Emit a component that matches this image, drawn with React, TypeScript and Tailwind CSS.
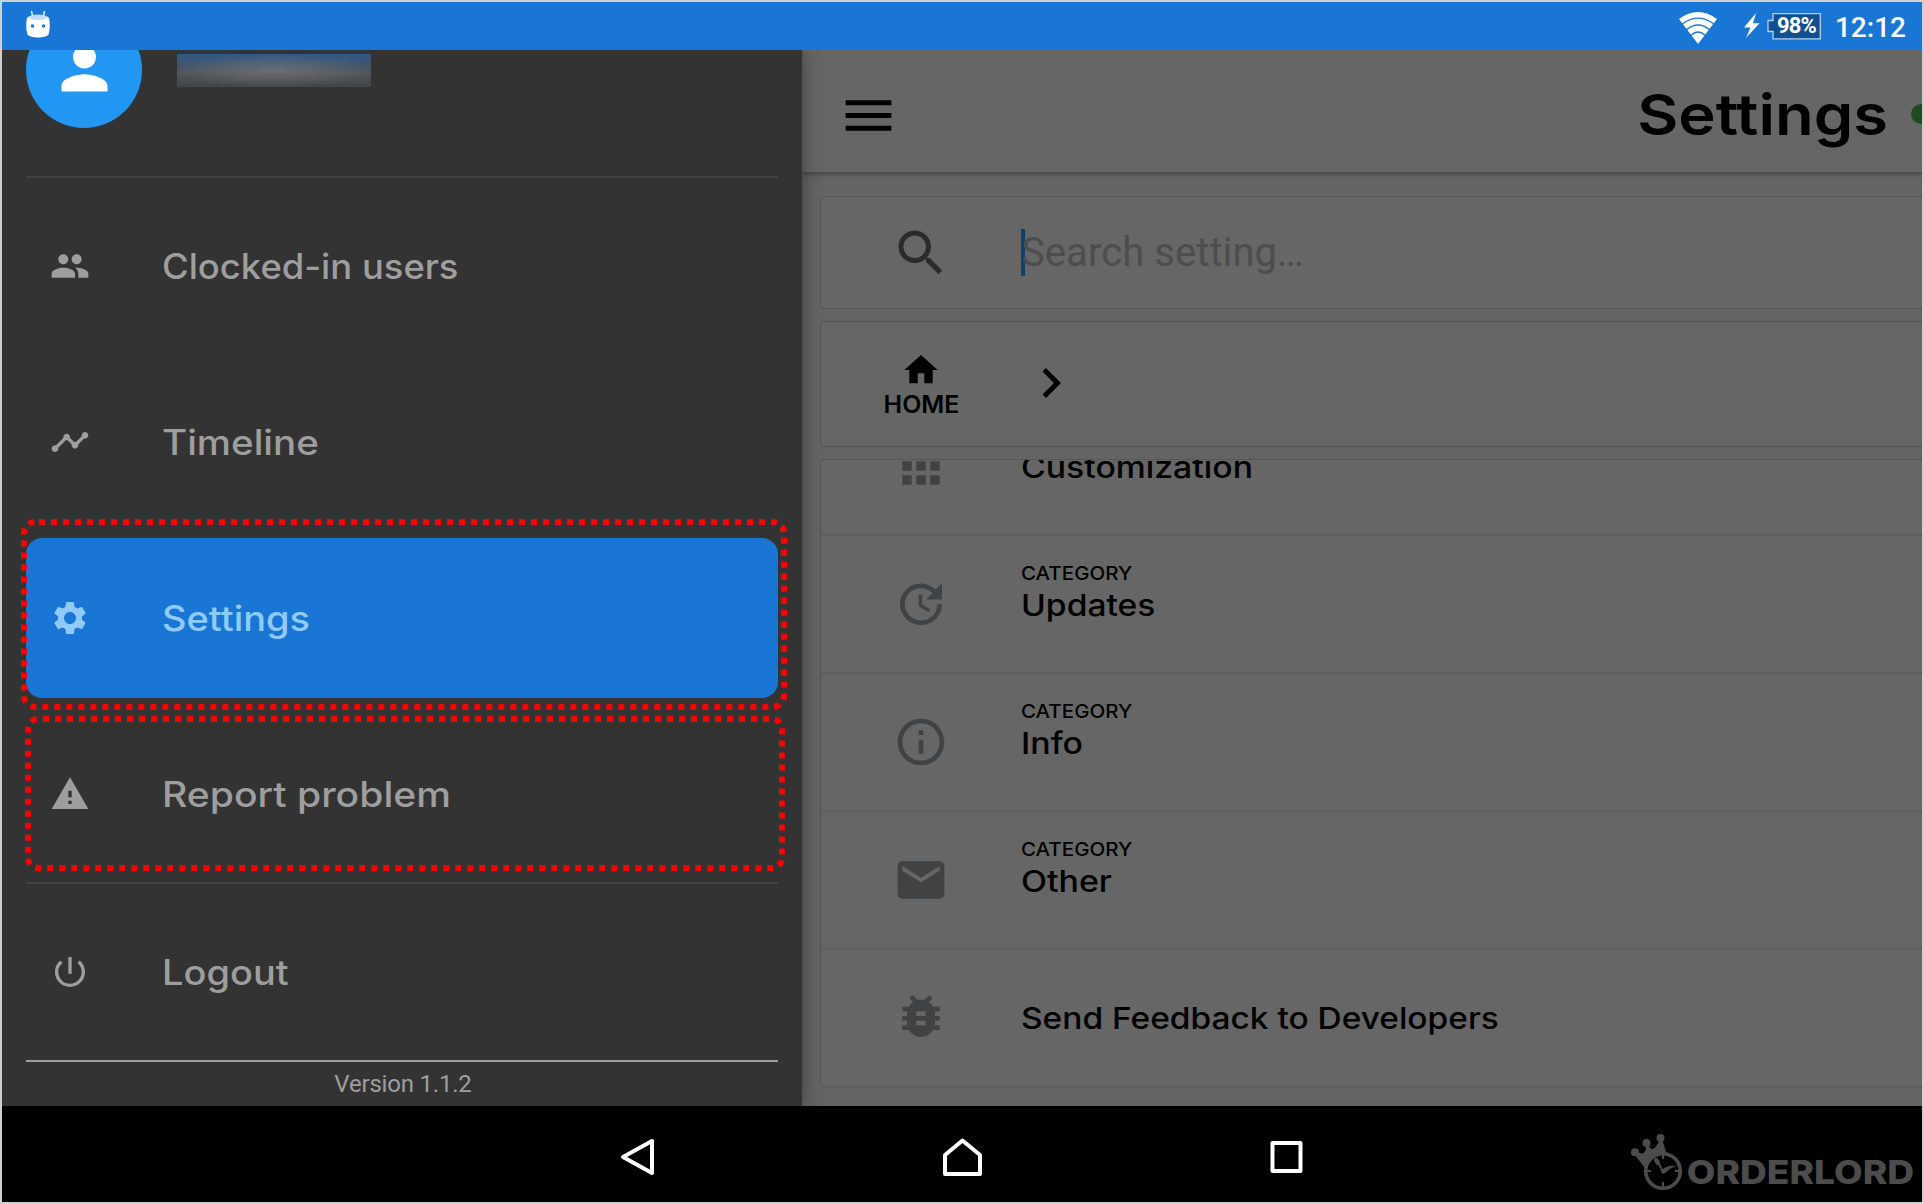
import type { ReactNode } from "react";
import type { IconType } from "react-icons";
import {
  MdPerson, MdPeople, MdTimeline, MdSettings, MdWarning, MdPowerSettingsNew,
  MdMenu, MdSearch, MdHome, MdChevronRight, MdApps, MdUpdate, MdInfoOutline,
  MdMail, MdBugReport,
} from "react-icons/md";

function StatusBar() {
  return (
    <header className="flex h-12 shrink-0 items-center justify-between bg-[#1976d4] pl-6 pr-4 text-white">
      <svg width="24" height="28" viewBox="0 0 24 28" className="mb-1">
        <path d="M5.500 1 6.500 6M18.500 1 17.500 6" stroke="#fff" strokeWidth="1.300" fill="none" />
        <path d="M1 8C4 4 20 4 23 8C24.200 13 24 20 22.500 24.500C20 28.500 4 28.500 1.500 24.500C0 20-.2 13 1 8Z" fill="#fff" />
        <ellipse cx="12" cy="7.300" rx="9.500" ry="2.700" fill="#c3daf4" />
        <circle cx="6.500" cy="16" r="1.700" fill="#1976d4" />
        <circle cx="17.500" cy="16" r="1.700" fill="#1976d4" />
      </svg>
      <div className="flex items-center">
        <svg width="40" height="34" viewBox="0 0 40 34" className="mr-[25px] mt-[3px]">
          <path d="M20 33 1 8Q20-6 39 8Z" fill="#fff" />
          <g fill="none" stroke="#1976d4" strokeWidth="1.400">
            <path d="M4.500 12.800Q20 1.500 35.500 12.800" />
            <path d="M8.500 18.600Q20 9.500 31.500 18.600" />
            <path d="M13 24.200Q20 18 27 24.200" />
          </g>
        </svg>
        <svg width="18" height="26" viewBox="0 0 18 26" className="mr-1.5">
          <path d="M13 0 1 14.500 7.500 14.500 3 25 16.500 10.200 10 10.200Z" fill="#fff" />
        </svg>
        <div className="relative flex h-[27px] w-[54px] items-center">
          <svg width="54" height="27" viewBox="0 0 54 27" className="absolute inset-0">
            <path d="M6 .7H53.300V25.800H6V18.500H1V7.500H6Z" fill="#11508f" stroke="#b5d0ee" strokeWidth="1.300" />
          </svg>
          <span className="relative -mt-px ml-2.5 font-[Roboto] text-[22px] font-bold leading-none tracking-[-0.9px]">98%</span>
        </div>
        <span className="ml-3.5 mt-1 font-[Roboto] text-[28px] font-medium leading-none">12:12</span>
      </div>
    </header>
  );
}

type DrawerItemProps = { icon: IconType; label: string; stretch: string; active?: boolean };

function DrawerItem({ icon: Icon, label, stretch, active = false }: DrawerItemProps) {
  return (
    <div className={active
      ? "flex h-40 items-center rounded-2xl bg-[#1976d4] pl-6 text-[#90caf9]"
      : "flex h-40 items-center rounded-2xl pl-6 text-[#9e9e9e]"}>
      <Icon size={40} />
      <span className={"ml-[72px] origin-left font-[Inter] text-[35px] font-medium leading-none " + stretch}>{label}</span>
    </div>
  );
}

function Drawer() {
  return (
    <aside className="relative z-10 flex w-[800px] shrink-0 flex-col bg-[#333333] px-6 shadow-[0_0_18px_rgba(0,0,0,0.4)]">
      <div className="flex h-[126px] items-start">
        <div className="-mt-[38px] flex size-[116px] shrink-0 items-center justify-center rounded-full bg-[#2196f3] text-white">
          <MdPerson size={69} className="-mt-1" />
        </div>
        <div className="ml-[35px] mt-1 h-[33px] w-[194px] bg-[radial-gradient(ellipse_at_center,rgba(150,150,150,0.4),transparent_75%),linear-gradient(#2f5687,#505356_60%,#444444)]" />
      </div>
      <hr className="h-0.5 border-0 bg-[#424242]" />
      <nav className="flex flex-col gap-4 py-2">
        <DrawerItem icon={MdPeople} label="Clocked-in users" stretch="scale-x-[1.04]" />
        <DrawerItem icon={MdTimeline} label="Timeline" stretch="scale-x-[1.1]" />
        <DrawerItem icon={MdSettings} label="Settings" stretch="scale-x-[1.085]" active />
        <DrawerItem icon={MdWarning} label="Report problem" stretch="scale-x-[1.117]" />
      </nav>
      <hr className="h-0.5 border-0 bg-[#424242]" />
      <div className="py-2">
        <DrawerItem icon={MdPowerSettingsNew} label="Logout" stretch="scale-x-[1.085]" />
      </div>
      <hr className="h-0.5 border-0 bg-[#9e9e9e]" />
      <p className="pl-0.5 pt-1.5 text-center font-[Roboto] text-2xl tracking-[-0.2px] text-[#9e9e9e]">Version 1.1.2</p>
    </aside>
  );
}

function Card({ className, children }: { className: string; children: ReactNode }) {
  return <section className={"ml-[18px] rounded-l border border-r-0 border-[#575757] bg-[#666666] " + className}>{children}</section>;
}

type CategoryRowProps = { icon: IconType; title: string; category?: string; iconClass?: string; titleClass?: string };

function CategoryRow({ icon: Icon, title, category, iconClass = "-mt-px", titleClass = "scale-x-[1.13]" }: CategoryRowProps) {
  return (
    <div className="flex h-[138px] shrink-0 items-center border-b-2 border-[#5e5e5e] pl-[72px]">
      <Icon size={56} color="#404244" className={"shrink-0 " + iconClass} />
      <div className={category
        ? "ml-[72px] flex flex-col items-start pb-[22px] font-[Inter] text-black"
        : "ml-[72px] flex flex-col items-start font-[Inter] text-black"}>
        {category && <span className="relative top-px origin-left scale-x-[1.08] text-[19px] font-medium leading-6">{category}</span>}
        <span className={"origin-left text-[30px] font-medium leading-10 " + titleClass}>{title}</span>
      </div>
    </div>
  );
}

function SettingsPane() {
  return (
    <main className="flex min-w-0 grow flex-col overflow-hidden bg-[#646464]">
      <div className="relative flex h-[122px] shrink-0 items-center justify-between overflow-visible bg-[#666666] pl-9 shadow-[0_2px_5px_rgba(0,0,0,0.35)]">
        <MdMenu size={61} color="#000" className="mt-[9px]" />
        <div className="mt-1.5 flex items-center">
          <h1 className="origin-right scale-x-[1.11] font-[Inter] text-[57px] font-semibold leading-none text-black">Settings</h1>
          <span className="-mr-[9px] ml-[23px] size-5 rounded-full bg-[#1f4a22]" />
        </div>
      </div>
      <Card className="mt-6 flex h-[113px] shrink-0 items-center pl-[70px]">
        <MdSearch size={60} color="#2b2b2b" />
        <span className="ml-[70px] h-[47px] w-1 bg-[#0b4270]" />
        <span className="-ml-1 font-[Roboto] text-[40px] leading-none tracking-[0.07px] text-[#4d4d4d]">Search setting…</span>
      </Card>
      <Card className="mt-3 flex h-[126px] shrink-0 items-center pl-[63px]">
        <div className="flex w-[74px] flex-col items-center">
          <MdHome size={40} color="#000" className="relative top-px" />
          <span className="ml-px mt-0.5 scale-x-[1.04] font-[Inter] text-2xl font-semibold leading-7 text-black">HOME</span>
        </div>
        <MdChevronRight size={60} color="#000" className="-mt-0.5 ml-[63px]" />
      </Card>
      <Card className="mt-3 flex h-[629px] shrink-0 flex-col justify-end overflow-hidden border-b-0">
        <CategoryRow icon={MdApps} title="Customization" titleClass="mt-0.5 scale-x-[1.125]" />
        <CategoryRow icon={MdUpdate} title="Updates" category="CATEGORY" titleClass="scale-x-[1.12]" />
        <CategoryRow icon={MdInfoOutline} title="Info" category="CATEGORY" />
        <CategoryRow icon={MdMail} title="Other" category="CATEGORY" />
        <CategoryRow icon={MdBugReport} title="Send Feedback to Developers" iconClass="-mt-1" titleClass="scale-x-[1.115]" />
      </Card>
    </main>
  );
}

function Highlights() {
  return (
    <svg width="800" height="400" viewBox="0 500 800 400" className="pointer-events-none absolute left-0 top-[500px] z-20">
      <g fill="none" stroke="#ff0000" strokeWidth="6" strokeDasharray="6 6">
        <rect x="24" y="522" width="760" height="185" rx="11" strokeDashoffset="8" />
        <rect x="28" y="719" width="754" height="149" rx="10" strokeDashoffset="7" />
      </g>
    </svg>
  );
}

function Watermark() {
  return (
    <div className="absolute right-2 top-[27px] flex items-start text-[#4c4c4c]">
      <svg width="56" height="58" viewBox="1630 1133 56 58">
        <g fill="currentColor">
          <circle cx="1635" cy="1152.300" r="4" />
          <circle cx="1646.500" cy="1143" r="4" />
          <circle cx="1660.500" cy="1138" r="4" />
          <path d="M1634 1154 1637 1152Q1647 1157 1646 1144L1648 1144Q1653 1156 1660 1139L1662 1139L1668 1158L1645 1168Z" />
        </g>
        <circle cx="1663" cy="1171" r="17.300" fill="#000" stroke="currentColor" strokeWidth="3.600" />
        <path d="M1663 1155v4M1663 1187v-5M1647 1171h4M1679 1171h-4M1663 1172l-6-12" stroke="currentColor" strokeWidth="2" />
        <ellipse cx="1657" cy="1161.500" rx="2.300" ry="4" transform="rotate(-28 1657 1161.500)" fill="currentColor" />
        <path d="M1661 1171Q1666 1165 1676 1166Q1670 1168 1665 1173Q1662 1175 1661 1171Z" fill="currentColor" />
      </svg>
      <span className="ml-[26px] mt-[19px] origin-right scale-x-[1.125] font-[Inter] text-[33px] font-extrabold leading-10">ORDERLORD</span>
    </div>
  );
}

function NavigationBar() {
  return (
    <footer className="relative flex h-24 shrink-0 items-center justify-center gap-[284px] bg-black pt-2">
      <svg width="40" height="40" viewBox="0 0 40 40" fill="none" stroke="#fff" strokeWidth="4" strokeLinejoin="round">
        <path d="M34 3V35L5 19Z" />
      </svg>
      <svg width="40" height="40" viewBox="0 0 40 40" fill="none" stroke="#fff" strokeWidth="4" strokeLinejoin="round">
        <path d="M20.500 2.500 38 17V36H3V17Z" />
      </svg>
      <svg width="40" height="40" viewBox="0 0 40 40" fill="none" stroke="#fff" strokeWidth="4" strokeLinejoin="round">
        <path d="M6.500 5H34.500V33H6.500Z" />
      </svg>
      <Watermark />
    </footer>
  );
}

export default function App() {
  return (
    <div className="relative flex h-[1204px] w-[1924px] flex-col overflow-hidden border-2 border-[#cfcfcf] bg-black">
      <StatusBar />
      <div className="flex h-[1056px] shrink-0 overflow-hidden">
        <Drawer />
        <SettingsPane />
      </div>
      <NavigationBar />
      <div className="absolute -left-0.5 -top-0.5">
        <Highlights />
      </div>
    </div>
  );
}
